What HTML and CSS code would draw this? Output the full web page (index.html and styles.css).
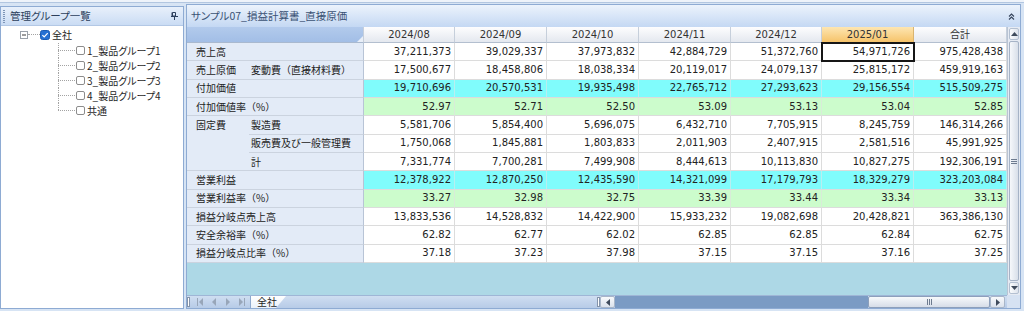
FILE: index.html
```html
<!DOCTYPE html>
<html lang="ja">
<head>
<meta charset="utf-8">
<title>損益計算書</title>
<link rel="stylesheet" href="styles.css">
</head>
<body>
<div class="app">
  <aside class="side">
    <div class="side-head">
      <span class="grip"></span>
      <span class="ptitle">管理グループ一覧</span>
      <svg class="pin" width="7" height="8" viewBox="0 0 7 8"><path d="M1.5 0.5h3v3.5h-3z" fill="none" stroke="#2c3f5c"/><path d="M1 0.5v3.5" stroke="#2c3f5c"/><path d="M0 4.5h7M3.5 4.5V8" stroke="#2c3f5c"/></svg>
    </div>
    <div class="tree">
      <div class="node root">
        <svg class="exp" width="8" height="8" viewBox="0 0 8 8"><rect x="0.5" y="0.5" width="7" height="7" fill="#fff" stroke="#9aa1aa"/><path d="M2 4h4" stroke="#3a3a3a"/></svg>
        <span class="hline"></span>
        <svg class="chk" width="10" height="10" viewBox="0 0 10 10"><rect x="0.5" y="0.5" width="9" height="9" rx="2" fill="#2470d3" stroke="#1b5cb3"/><path d="M2.4 5.1l1.8 1.8 3.5-3.8" fill="none" stroke="#fff" stroke-width="1.2"/></svg>
        <span class="lbl">全社</span>
      </div>
      <div class="children">
        <div class="node child">
          <svg class="conn" width="18" height="15" viewBox="0 0 18 15"><path d="M0.5 0v15M0 7.5h18" stroke="#a3a3a3" stroke-dasharray="1 1"/></svg>
          <svg class="chk" width="9" height="9" viewBox="0 0 9 9"><rect x="0.5" y="0.5" width="8" height="8" rx="1.5" fill="#fff" stroke="#8c8c8c"/></svg>
          <span class="lbl">1_製品グループ1</span>
        </div>
        <div class="node child">
          <svg class="conn" width="18" height="15" viewBox="0 0 18 15"><path d="M0.5 0v15M0 7.5h18" stroke="#a3a3a3" stroke-dasharray="1 1"/></svg>
          <svg class="chk" width="9" height="9" viewBox="0 0 9 9"><rect x="0.5" y="0.5" width="8" height="8" rx="1.5" fill="#fff" stroke="#8c8c8c"/></svg>
          <span class="lbl">2_製品グループ2</span>
        </div>
        <div class="node child">
          <svg class="conn" width="18" height="15" viewBox="0 0 18 15"><path d="M0.5 0v15M0 7.5h18" stroke="#a3a3a3" stroke-dasharray="1 1"/></svg>
          <svg class="chk" width="9" height="9" viewBox="0 0 9 9"><rect x="0.5" y="0.5" width="8" height="8" rx="1.5" fill="#fff" stroke="#8c8c8c"/></svg>
          <span class="lbl">3_製品グループ3</span>
        </div>
        <div class="node child">
          <svg class="conn" width="18" height="15" viewBox="0 0 18 15"><path d="M0.5 0v15M0 7.5h18" stroke="#a3a3a3" stroke-dasharray="1 1"/></svg>
          <svg class="chk" width="9" height="9" viewBox="0 0 9 9"><rect x="0.5" y="0.5" width="8" height="8" rx="1.5" fill="#fff" stroke="#8c8c8c"/></svg>
          <span class="lbl">4_製品グループ4</span>
        </div>
        <div class="node child">
          <svg class="conn" width="18" height="15" viewBox="0 0 18 15"><path d="M0.5 0v7.5M0 7.5h18" stroke="#a3a3a3" stroke-dasharray="1 1"/></svg>
          <svg class="chk" width="9" height="9" viewBox="0 0 9 9"><rect x="0.5" y="0.5" width="8" height="8" rx="1.5" fill="#fff" stroke="#8c8c8c"/></svg>
          <span class="lbl">共通</span>
        </div>
      </div>
    </div>
  </aside>

  <section class="main">
    <div class="main-head">
      <span class="mtitle">サンプル07_損益計算書_直接原価</span>
      <svg class="collapse" width="7" height="7" viewBox="0 0 7 7"><path d="M1 3.5L3.5 1L6 3.5M1 6.5L3.5 4L6 6.5" fill="none" stroke="#34435a" stroke-width="1.1"/></svg>
    </div>
    <div class="gridwrap">
      <div class="sheet">
        <table class="grid">
          <colgroup>
            <col class="ca"><col class="cb">
            <col class="c91"><col class="c92"><col class="c92"><col class="c92"><col class="c91"><col class="c92"><col class="c93">
          </colgroup>
          <thead>
            <tr>
              <th class="corner" colspan="2"><svg class="tri" width="6" height="6" viewBox="0 0 6 6"><path d="M6 0V6H0z" fill="#e9eff8"/></svg></th>
              <th class="ch">2024/08</th><th class="ch">2024/09</th><th class="ch">2024/10</th><th class="ch">2024/11</th><th class="ch">2024/12</th><th class="ch hot">2025/01</th><th class="ch">合計</th>
            </tr>
          </thead>
          <tbody>
            <tr><th class="rh" colspan="2">売上高</th><td>37,211,373</td><td>39,029,337</td><td>37,973,832</td><td>42,884,729</td><td>51,372,760</td><td class="cur">54,971,726</td><td>975,428,438</td></tr>
            <tr><th class="rh ra">売上原価</th><th class="rh rb">変動費（直接材料費）</th><td>17,500,677</td><td>18,458,806</td><td>18,038,334</td><td>20,119,017</td><td>24,079,137</td><td>25,815,172</td><td>459,919,163</td></tr>
            <tr class="cy"><th class="rh" colspan="2">付加価値</th><td>19,710,696</td><td>20,570,531</td><td>19,935,498</td><td>22,765,712</td><td>27,293,623</td><td>29,156,554</td><td>515,509,275</td></tr>
            <tr class="gr"><th class="rh" colspan="2">付加価値率（%）</th><td>52.97</td><td>52.71</td><td>52.50</td><td>53.09</td><td>53.13</td><td>53.04</td><td>52.85</td></tr>
            <tr><th class="rh ra top" rowspan="3">固定費</th><th class="rh rb">製造費</th><td>5,581,706</td><td>5,854,400</td><td>5,696,075</td><td>6,432,710</td><td>7,705,915</td><td>8,245,759</td><td>146,314,266</td></tr>
            <tr><th class="rh rb">販売費及び一般管理費</th><td>1,750,068</td><td>1,845,881</td><td>1,803,833</td><td>2,011,903</td><td>2,407,915</td><td>2,581,516</td><td>45,991,925</td></tr>
            <tr><th class="rh rb">計</th><td>7,331,774</td><td>7,700,281</td><td>7,499,908</td><td>8,444,613</td><td>10,113,830</td><td>10,827,275</td><td>192,306,191</td></tr>
            <tr class="cy"><th class="rh" colspan="2">営業利益</th><td>12,378,922</td><td>12,870,250</td><td>12,435,590</td><td>14,321,099</td><td>17,179,793</td><td>18,329,279</td><td>323,203,084</td></tr>
            <tr class="gr"><th class="rh" colspan="2">営業利益率（%）</th><td>33.27</td><td>32.98</td><td>32.75</td><td>33.39</td><td>33.44</td><td>33.34</td><td>33.13</td></tr>
            <tr><th class="rh" colspan="2">損益分岐点売上高</th><td>13,833,536</td><td>14,528,832</td><td>14,422,900</td><td>15,933,232</td><td>19,082,698</td><td>20,428,821</td><td>363,386,130</td></tr>
            <tr><th class="rh" colspan="2">安全余裕率（%）</th><td>62.82</td><td>62.77</td><td>62.02</td><td>62.85</td><td>62.85</td><td>62.84</td><td>62.75</td></tr>
            <tr><th class="rh" colspan="2">損益分岐点比率（%）</th><td>37.18</td><td>37.23</td><td>37.98</td><td>37.15</td><td>37.15</td><td>37.16</td><td>37.25</td></tr>
          </tbody>
        </table>
        <div class="blank"></div>
      </div>

      <div class="vscroll">
        <div class="vbtn"><svg width="7" height="4" viewBox="0 0 7 4"><path d="M0 4L3.5 0L7 4z" fill="#3f4b5c"/></svg></div>
        <div class="vthumb"><svg width="6" height="5" viewBox="0 0 6 5"><path d="M0 0.5h6M0 2.5h6M0 4.5h6" stroke="#6d7b8f"/></svg></div>
        <div class="vbtn"><svg width="7" height="4" viewBox="0 0 7 4"><path d="M0 0L3.5 4L7 0z" fill="#3f4b5c"/></svg></div>
      </div>

      <div class="hbar">
        <span class="split"></span>
        <svg class="nav" width="52" height="8" viewBox="0 0 52 8"><g fill="#98a6b9"><rect x="4" y="0" width="1" height="8"/><path d="M10 0v8l-4-4z"/><path d="M23 0v8l-4-4z"/><path d="M33 0v8l4-4z"/><path d="M46 0v8l4-4z"/><rect x="51" y="0" width="1" height="8"/></g></svg>
        <span class="tab">全社</span>
        <span class="tabspace"></span>
        <div class="hscroll">
          <span class="hgrip"></span>
          <span class="hbtn"><svg width="4" height="7" viewBox="0 0 4 7"><path d="M4 0v7L0 3.5z" fill="#3f4b5c"/></svg></span>
          <span class="htrack"></span>
          <span class="hthumb"><svg width="5" height="6" viewBox="0 0 5 6"><path d="M0.5 0v6M2.5 0v6M4.5 0v6" stroke="#6d7b8f"/></svg></span>
          <span class="hbtn"><svg width="4" height="7" viewBox="0 0 4 7"><path d="M0 0v7L4 3.5z" fill="#3f4b5c"/></svg></span>
        </div>
      </div>
      <div class="scorner"></div>
    </div>
  </section>
</div>
</body>
</html>
```

FILE: styles.css
```css
* { box-sizing: border-box; }
html, body { margin: 0; padding: 0; }
body {
  width: 1024px;
  height: 311px;
  overflow: hidden;
  background: linear-gradient(to bottom, #eef3fa 0, #eef3fa 2px, #b2c6e0 2px, #b2c6e0 3px, #d7e4f4 3px);
  font-family: "Noto Sans CJK JP", sans-serif;
  font-feature-settings: "palt";
  color: #1f1f1f;
}
.app {
  display: flex;
  gap: 2px;
  height: 311px;
  padding: 4px 3px 2px 0;
}

/* left panel */
.side {
  width: 184px;
  margin-top: 2px;
  border: 1px solid #8eabd3;
  background: #fff;
  display: flex;
  flex-direction: column;
}
.side-head {
  height: 19px;
  display: flex;
  align-items: center;
  padding: 0 5px 0 2px;
  background: linear-gradient(#e8f0fb, #cadcf4);
  border-bottom: 1px solid #b3c8e5;
}
.grip {
  width: 2px;
  height: 13px;
  margin-right: 5px;
  background: repeating-linear-gradient(to bottom, #7d94b6 0, #7d94b6 1px, transparent 1px, transparent 2px);
}
.ptitle {
  font-size: 10.5px;
  line-height: 14px;
  color: #2c3f5c;
}
.pin { margin-left: auto; }

.tree { font-size: 10px; line-height: 14px; }
.node { display: flex; align-items: center; }
.root { height: 17px; padding-left: 19px; }
.hline {
  width: 12px;
  height: 0;
  border-top: 1px dotted #a3a3a3;
}
.root .lbl { margin-left: 2px; }
.children { padding-left: 57px; }
.child { height: 15px; }
.child .lbl { margin-left: 2px; }

/* main panel */
.main {
  width: 835px;
  border: 1px solid #8eabd3;
  background: #fff;
  display: flex;
  flex-direction: column;
}
.main-head {
  height: 22px;
  display: flex;
  align-items: center;
  padding: 0 5px 0 4px;
  background: linear-gradient(#ecf3fc, #c4d8f3);
}
.mtitle {
  font-size: 10.5px;
  line-height: 14px;
  color: #3a5274;
}
.collapse { margin-left: auto; }

.gridwrap {
  display: grid;
  grid-template-columns: 820px 13px;
  grid-template-rows: 268px 13px;
}
.sheet {
  grid-row: 1;
  grid-column: 1;
  display: flex;
  flex-direction: column;
  overflow: hidden;
}

.grid {
  border-collapse: separate;
  border-spacing: 0;
  table-layout: fixed;
  width: 820px;
  font-family: "DejaVu Sans", "Noto Sans CJK JP", sans-serif;
  font-size: 10px;
  color: #222;
}
.ca { width: 62px; }
.cb { width: 115px; }
.c91 { width: 91px; }
.c92 { width: 92px; }
.c93 { width: 93px; }
.grid thead tr { height: 16px; }
.grid tbody tr { height: 18.33px; }
.grid th, .grid td {
  padding: 0;
  line-height: 14px;
  white-space: nowrap;
  overflow: hidden;
  font-weight: normal;
}
.corner {
  background: linear-gradient(#b2caec, #a2bee6);
  border-right: 1px solid #c6cfdb;
  border-bottom: 1px solid #a9b9cf;
  text-align: right;
  vertical-align: bottom;
  padding: 0 2px 2px 0;
}
.tri { display: block; margin-left: auto; }
.ch {
  background: linear-gradient(#fdfdfe, #e4e8ef);
  border-right: 1px solid #c6cfdb;
  border-bottom: 1px solid #b3bfcf;
  text-align: center;
  color: #333;
}
.ch.hot {
  background: linear-gradient(#fde6b2, #f6c36a);
  border-right-color: #d9b470;
}
.rh {
  background: #e3ebf7;
  border-bottom: 1px solid #cbd3df;
  border-right: 1px solid #b8c4d6;
  text-align: left;
  padding-left: 9px !important;
  font-family: "Noto Sans CJK JP", sans-serif;
  font-feature-settings: normal;
  color: #222;
}
.rh.ra { border-right: none; }
.rh.rb { padding-left: 2px !important; }
.rh.top { vertical-align: top; padding-top: 2px !important; }
.grid td {
  background: #fff;
  text-align: right;
  padding-right: 3px;
  border-right: 1px solid #dcdcdc;
  border-bottom: 1px solid #dcdcdc;
}
.cy td { background: #80fcfc; border-right-color: #b9eef0; }
.gr td { background: #ccfccc; border-right-color: #d8ecd8; }
.grid td.cur {
  outline: 2px solid #161616;
  outline-offset: -1px;
}
.blank {
  flex: 1;
  background: #add8e6;
}

/* vertical scrollbar */
.vscroll {
  grid-row: 1;
  grid-column: 2;
  display: flex;
  flex-direction: column;
  gap: 1px;
  padding: 1px;
  background: #e6ebf3;
  border-left: 1px solid #b9c4d4;
}
.vbtn {
  height: 12px;
  display: flex;
  align-items: center;
  justify-content: center;
  border: 1px solid #b4c0d1;
  border-radius: 2px;
  background: linear-gradient(to right, #fbfcfd, #dde3ec);
}
.vthumb {
  flex: 1;
  display: flex;
  align-items: center;
  justify-content: center;
  border: 1px solid #a6b3c6;
  border-radius: 2px;
  background: linear-gradient(to right, #f6f8fb, #d8dfe9);
}

/* bottom bar */
.hbar {
  grid-row: 2;
  grid-column: 1;
  display: flex;
  align-items: stretch;
  background: linear-gradient(#cfdef1, #b7cbe7);
  border-top: 1px solid #9fb6d6;
}
.split {
  width: 3px;
  margin: 1px 0;
  border: 1px solid #8494ab;
  background: #fff;
}
.nav {
  align-self: center;
  margin: 0 5px 0 3px;
}
.tab {
  width: 36px;
  font-size: 10px;
  line-height: 12px;
  padding-left: 6px;
  background: linear-gradient(#ffffff, #eaf1fa);
  clip-path: polygon(0 0, 100% 0, calc(100% - 10px) 100%, 0 100%);
  border-left: 1px solid #8ea9cf;
  color: #1f1f1f;
}
.tabspace { flex: 1; }
.hscroll {
  width: 410px;
  display: flex;
  align-items: stretch;
  padding-right: 2px;
}
.hgrip {
  width: 3px;
  margin: 1px 0;
  border: 1px solid #8494ab;
  background: #fff;
}
.hbtn {
  width: 15px;
  display: flex;
  align-items: center;
  justify-content: center;
  background: linear-gradient(#f8fafc, #dbe2ec);
  border: 1px solid #a8b6c9;
  border-radius: 2px;
}
.htrack {
  flex: 1;
  background: #7b9bc4;
}
.hthumb {
  width: 122px;
  display: flex;
  align-items: center;
  justify-content: center;
  background: linear-gradient(#f7f9fb, #d6dde8);
  border: 1px solid #8c9fbb;
  border-radius: 2px;
}
.scorner {
  grid-row: 2;
  grid-column: 2;
  background: #d6e2f2;
}
```
